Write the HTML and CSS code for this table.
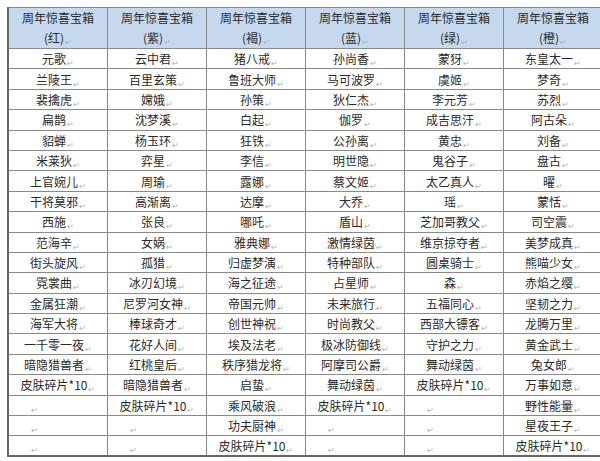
FILE: index.html
```html
<!DOCTYPE html>
<html lang="zh">
<head>
<meta charset="utf-8">
<link rel="stylesheet" href="styles.css">
</head>
<body>
<div class="page">
<table class="grid">
<thead>
<tr class="head">
<th>周年惊喜宝箱<br>(红)<span class="pm">↵</span></th>
<th>周年惊喜宝箱<br>(紫)<span class="pm">↵</span></th>
<th>周年惊喜宝箱<br>(褐)<span class="pm">↵</span></th>
<th>周年惊喜宝箱<br>(蓝)<span class="pm">↵</span></th>
<th>周年惊喜宝箱<br>(绿)<span class="pm">↵</span></th>
<th>周年惊喜宝箱<br>(橙)<span class="pm">↵</span></th>
<td class="eor"><i></i></td>
</tr>
</thead>
<tbody>
<tr><td>元歌<span class="pm">↵</span></td><td>云中君<span class="pm">↵</span></td><td>猪八戒<span class="pm">↵</span></td><td>孙尚香<span class="pm">↵</span></td><td>蒙犽<span class="pm">↵</span></td><td>东皇太一<span class="pm">↵</span></td><td class="eor"><i></i></td></tr>
<tr><td>兰陵王<span class="pm">↵</span></td><td>百里玄策<span class="pm">↵</span></td><td>鲁班大师<span class="pm">↵</span></td><td>马可波罗<span class="pm">↵</span></td><td>虞姬<span class="pm">↵</span></td><td>梦奇<span class="pm">↵</span></td><td class="eor"><i></i></td></tr>
<tr><td>裴擒虎<span class="pm">↵</span></td><td>嫦娥<span class="pm">↵</span></td><td>孙策<span class="pm">↵</span></td><td>狄仁杰<span class="pm">↵</span></td><td>李元芳<span class="pm">↵</span></td><td>苏烈<span class="pm">↵</span></td><td class="eor"><i></i></td></tr>
<tr><td>扁鹊<span class="pm">↵</span></td><td>沈梦溪<span class="pm">↵</span></td><td>白起<span class="pm">↵</span></td><td>伽罗<span class="pm">↵</span></td><td>成吉思汗<span class="pm">↵</span></td><td>阿古朵<span class="pm">↵</span></td><td class="eor"><i></i></td></tr>
<tr><td>貂蝉<span class="pm">↵</span></td><td>杨玉环<span class="pm">↵</span></td><td>狂铁<span class="pm">↵</span></td><td>公孙离<span class="pm">↵</span></td><td>黄忠<span class="pm">↵</span></td><td>刘备<span class="pm">↵</span></td><td class="eor"><i></i></td></tr>
<tr><td>米莱狄<span class="pm">↵</span></td><td>弈星<span class="pm">↵</span></td><td>李信<span class="pm">↵</span></td><td>明世隐<span class="pm">↵</span></td><td>鬼谷子<span class="pm">↵</span></td><td>盘古<span class="pm">↵</span></td><td class="eor"><i></i></td></tr>
<tr><td>上官婉儿<span class="pm">↵</span></td><td>周瑜<span class="pm">↵</span></td><td>露娜<span class="pm">↵</span></td><td>蔡文姬<span class="pm">↵</span></td><td>太乙真人<span class="pm">↵</span></td><td>曜<span class="pm">↵</span></td><td class="eor"><i></i></td></tr>
<tr><td>干将莫邪<span class="pm">↵</span></td><td>高渐离<span class="pm">↵</span></td><td>达摩<span class="pm">↵</span></td><td>大乔<span class="pm">↵</span></td><td>瑶<span class="pm">↵</span></td><td>蒙恬<span class="pm">↵</span></td><td class="eor"><i></i></td></tr>
<tr><td>西施<span class="pm">↵</span></td><td>张良<span class="pm">↵</span></td><td>哪吒<span class="pm">↵</span></td><td>盾山<span class="pm">↵</span></td><td>芝加哥教父<span class="pm">↵</span></td><td>司空震<span class="pm">↵</span></td><td class="eor"><i></i></td></tr>
<tr><td>范海辛<span class="pm">↵</span></td><td>女娲<span class="pm">↵</span></td><td>雅典娜<span class="pm">↵</span></td><td>激情绿茵<span class="pm">↵</span></td><td>维京掠夺者<span class="pm">↵</span></td><td>美梦成真<span class="pm">↵</span></td><td class="eor"><i></i></td></tr>
<tr><td>街头旋风<span class="pm">↵</span></td><td>孤猎<span class="pm">↵</span></td><td>归虚梦演<span class="pm">↵</span></td><td>特种部队<span class="pm">↵</span></td><td>圆桌骑士<span class="pm">↵</span></td><td>熊喵少女<span class="pm">↵</span></td><td class="eor"><i></i></td></tr>
<tr><td>霓裳曲<span class="pm">↵</span></td><td>冰刃幻境<span class="pm">↵</span></td><td>海之征途<span class="pm">↵</span></td><td>占星师<span class="pm">↵</span></td><td>森<span class="pm">↵</span></td><td>赤焰之缨<span class="pm">↵</span></td><td class="eor"><i></i></td></tr>
<tr><td>金属狂潮<span class="pm">↵</span></td><td>尼罗河女神<span class="pm">↵</span></td><td>帝国元帅<span class="pm">↵</span></td><td>未来旅行<span class="pm">↵</span></td><td>五福同心<span class="pm">↵</span></td><td>坚韧之力<span class="pm">↵</span></td><td class="eor"><i></i></td></tr>
<tr><td>海军大将<span class="pm">↵</span></td><td>棒球奇才<span class="pm">↵</span></td><td>创世神祝<span class="pm">↵</span></td><td>时尚教父<span class="pm">↵</span></td><td>西部大镖客<span class="pm">↵</span></td><td>龙腾万里<span class="pm">↵</span></td><td class="eor"><i></i></td></tr>
<tr><td>一千零一夜<span class="pm">↵</span></td><td>花好人间<span class="pm">↵</span></td><td>埃及法老<span class="pm">↵</span></td><td>极冰防御线<span class="pm">↵</span></td><td>守护之力<span class="pm">↵</span></td><td>黄金武士<span class="pm">↵</span></td><td class="eor"><i></i></td></tr>
<tr><td>暗隐猎兽者<span class="pm">↵</span></td><td>红桃皇后<span class="pm">↵</span></td><td>秩序猎龙将<span class="pm">↵</span></td><td>阿摩司公爵<span class="pm">↵</span></td><td>舞动绿茵<span class="pm">↵</span></td><td>兔女郎<span class="pm">↵</span></td><td class="eor"><i></i></td></tr>
<tr><td>皮肤碎片*10<span class="pm">↵</span></td><td>暗隐猎兽者<span class="pm">↵</span></td><td>启蛰<span class="pm">↵</span></td><td>舞动绿茵<span class="pm">↵</span></td><td>皮肤碎片*10<span class="pm">↵</span></td><td>万事如意<span class="pm">↵</span></td><td class="eor"><i></i></td></tr>
<tr><td class="empty"><span class="pm">↵</span></td><td>皮肤碎片*10<span class="pm">↵</span></td><td>乘风破浪<span class="pm">↵</span></td><td>皮肤碎片*10<span class="pm">↵</span></td><td class="empty"><span class="pm">↵</span></td><td>野性能量<span class="pm">↵</span></td><td class="eor"><i></i></td></tr>
<tr><td class="empty"><span class="pm">↵</span></td><td class="empty"><span class="pm">↵</span></td><td>功夫厨神<span class="pm">↵</span></td><td class="empty"><span class="pm">↵</span></td><td class="empty"><span class="pm">↵</span></td><td>星夜王子<span class="pm">↵</span></td><td class="eor"><i></i></td></tr>
<tr><td class="empty"><span class="pm">↵</span></td><td class="empty"><span class="pm">↵</span></td><td>皮肤碎片*10<span class="pm">↵</span></td><td class="empty"><span class="pm">↵</span></td><td class="empty"><span class="pm">↵</span></td><td>皮肤碎片*10<span class="pm">↵</span></td><td class="eor"><i></i></td></tr>
</tbody>
</table>
</div>
</body>
</html>
```
FILE: styles.css
```css
html, body {
  margin: 0;
  padding: 0;
  background: #ffffff;
}
.page {
  padding: 7px 0 0 7px;
  font-family: "Noto Sans CJK SC", "Noto Sans", sans-serif;
  color: #2a2a2a;
}
.grid {
  border-collapse: collapse;
  table-layout: fixed;
  width: 593px;
}
.grid th,
.grid td {
  border: 1px solid #8a8a8a;
  padding: 0;
  text-align: center;
  font-size: 12px;
  font-weight: normal;
  line-height: 20px;
  white-space: nowrap;
  overflow: hidden;
  width: 98px;
}
.grid .head th {
  background: #c6d8ee;
  height: 40px;
  line-height: 20px;
  padding-top: 0;
}
.grid tbody tr {
  height: 20.4px;
}
.grid tbody td {
  height: 19px;
  line-height: 19px;
}
.grid tr > th:first-child,
.grid tr > td:first-child {
  border-left: 2px solid #666;
}
.grid tbody tr:last-child td {
  border-bottom: 2px solid #666;
}
.grid td.empty {
  text-align: left;
  padding-left: 21px;
}
.grid td.eor {
  border: none;
  width: 6px;
  background: #fff;
  position: relative;
}
.eor i {
  display: block;
  width: 2px;
  height: 2px;
  border-radius: 1px;
  background: #b8b8b8;
  margin-left: 3px;
}
.pm {
  font-size: 8px;
  color: #b0b0b0;
  margin-left: 1px;
  vertical-align: -2px;
  line-height: 1;
}
```
